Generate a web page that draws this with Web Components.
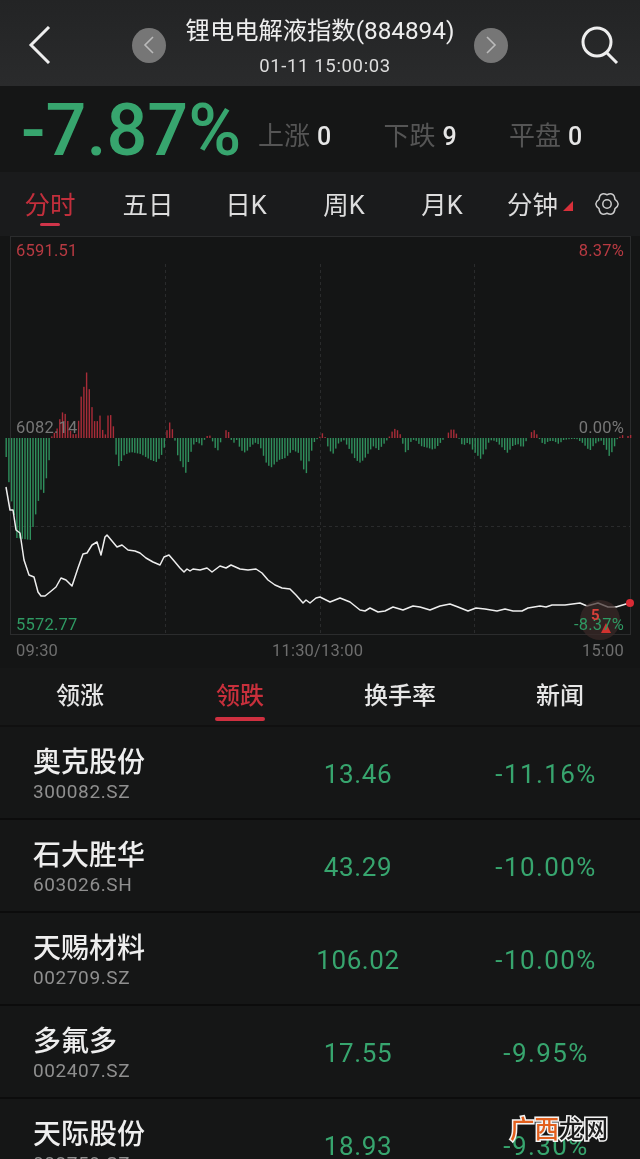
<!DOCTYPE html>
<html lang="zh">
<head>
<meta charset="utf-8">
<title>锂电电解液指数</title>
<style>
  html, body { margin: 0; height: 1159px; overflow: hidden; background: #151616; }
  body { position: relative; font-family: Roboto, "Noto Sans CJK SC", sans-serif; color: #e8e8e8; filter: blur(.35px); }
</style>
</head>
<body>
<index-header name="锂电电解液指数(884894)" time="01-11 15:00:03"></index-header>
<index-summary change="-7.87%" up="0" down="9" flat="0"></index-summary>
<period-tabs></period-tabs>
<minute-chart></minute-chart>
<rank-tabs></rank-tabs>
<stock-row name="奥克股份" code="300082.SZ" price="13.46" pct="-11.16%"></stock-row>
<stock-row name="石大胜华" code="603026.SH" price="43.29" pct="-10.00%"></stock-row>
<stock-row name="天赐材料" code="002709.SZ" price="106.02" pct="-10.00%"></stock-row>
<stock-row name="多氟多" code="002407.SZ" price="17.55" pct="-9.95%"></stock-row>
<stock-row name="天际股份" code="002759.SZ" price="18.93" pct="-9.30%"></stock-row>
<site-mark></site-mark>

<script>
// Top bar: back, prev/next, title, search
class IndexHeader extends HTMLElement {
  constructor() {
    super();
    this.attachShadow({ mode: 'open' });
    this.shadowRoot.innerHTML = `
    <style>
      :host { display: flex; align-items: center; height: 86px; box-sizing: border-box; background: linear-gradient(#232425, #2a2b2c); }
      .back { margin-left: 25px; width: 28px; height: 38px; margin-top: 4px; }
      .mid { flex: 1; display: flex; align-items: center; justify-content: center; margin-left: 78px; margin-right: 71px; gap: 18px; }
      .round { width: 34px; height: 35px; border-radius: 50%; background: #767676; display: flex; align-items: center; justify-content: center; margin-top: 4px; }
      .title { text-align: center; width: 272px; margin-top: 10px; }
      .name { font-size: 24.3px; line-height: 30px; color: #eee; white-space: nowrap; margin-top: -3px; }
      .time { font-size: 18.5px; line-height: 24px; color: #ddd; margin-top: 8px; padding-left: 10px; letter-spacing: .65px; }
      .search { width: 40px; height: 40px; margin-right: 20px; margin-top: 4px; }
    </style>
    <svg class="back" viewBox="0 0 28 38" fill="none" stroke="#eee" stroke-width="3"><path d="M24 1 L6 19 L24 37"/></svg>
    <div class="mid">
      <span class="round"><svg width="14" height="20" viewBox="0 0 14 20" fill="none" stroke="#bbb" stroke-width="1.6"><path d="M11 2 L3 10 L11 18"/></svg></span>
      <div class="title"><div class="name"></div><div class="time"></div></div>
      <span class="round"><svg width="14" height="20" viewBox="0 0 14 20" fill="none" stroke="#bbb" stroke-width="1.6"><path d="M3 2 L11 10 L3 18"/></svg></span>
    </div>
    <svg class="search" viewBox="0 0 40 40" fill="none" stroke="#eee" stroke-width="3"><circle cx="17" cy="17" r="14"/><path d="M27 28 L37 38"/></svg>`;
    this.shadowRoot.querySelector('.name').textContent = this.getAttribute('name');
    this.shadowRoot.querySelector('.time').textContent = this.getAttribute('time');
  }
}
customElements.define('index-header', IndexHeader);

// Big change figure and the up/down/flat counts
class IndexSummary extends HTMLElement {
  constructor() {
    super();
    this.attachShadow({ mode: 'open' });
    this.shadowRoot.innerHTML = `
    <style>
      :host { display: flex; align-items: center; height: 86px; background: #151616; padding-left: 21px; }
      .big { font-size: 72px; line-height: 86px; color: #37a56e; width: 237px; white-space: nowrap; font-weight: 500; padding-top: 3px; }
      .stat { width: 125.5px; font-size: 26px; color: #555; white-space: nowrap; padding-top: 8px; }
      .stat b { font-weight: 500; color: #e6e6e6; font-size: 25px; margin-left: 7px; }
    </style>
    <div class="big"></div>
    <div class="stat">上涨<b class="up"></b></div>
    <div class="stat">下跌<b class="down"></b></div>
    <div class="stat">平盘<b class="flat"></b></div>`;
    const r = this.shadowRoot;
    r.querySelector('.big').textContent = this.getAttribute('change');
    r.querySelector('.up').textContent = this.getAttribute('up');
    r.querySelector('.down').textContent = this.getAttribute('down');
    r.querySelector('.flat').textContent = this.getAttribute('flat');
  }
}
customElements.define('index-summary', IndexSummary);

// 分时 / 五日 / ... period switcher
class PeriodTabs extends HTMLElement {
  constructor() {
    super();
    this.attachShadow({ mode: 'open' });
    // six-lobed gear outline
    let gear = '';
    for (let i = 0; i < 6; i++) {
      const pt = (r, deg) => (13 + r * Math.cos(deg * Math.PI / 180)).toFixed(2) + ' ' + (13 + r * Math.sin(deg * Math.PI / 180)).toFixed(2);
      const a = i * 60;
      if (i === 0) gear += 'M' + pt(9.2, a - 30);
      gear += ' Q' + pt(14.4, a) + ' ' + pt(9.2, a + 30);
    }
    this.shadowRoot.innerHTML = `
    <style>
      :host { display: grid; grid-template-columns: repeat(6, 98px) 1fr; height: 64px; background: #1a1b1c; padding-left: 1px; font-size: 25.5px; color: #ddd; }
      span { position: relative; display: flex; align-items: center; justify-content: center; height: 64px; margin-top: -2px; white-space: nowrap; }
      .on { color: #c22f3c; }
      .on::after { content: ""; position: absolute; left: 39px; width: 20px; top: 53px; height: 3px; background: #d0354a; border-radius: 2px; }
      i { width: 0; height: 0; border-style: solid; border-width: 0 0 10px 10px; border-color: transparent transparent #d8303a transparent; margin: 8px 0 0 5px; }
      svg { align-self: center; margin: 0 0 0 5px; }
    </style>
    <span class="on">分时</span><span>五日</span><span>日K</span><span>周K</span><span>月K</span><span>分钟<i></i></span>
    <svg width="26" height="26" viewBox="0 0 26 26" fill="none" stroke="#ccc" stroke-width="1.5" stroke-linejoin="round">
      <path d="${gear} Z"/>
      <circle cx="13" cy="13" r="4.2"/>
    </svg>`;
  }
}
customElements.define('period-tabs', PeriodTabs);

// Intraday chart: volume-ish bars and the price line, drawn in page coordinates
const BAR_KEYS = [[5,-14],[7,-34],[10,-60],[13,-72],[16,-100],[30,-102],[33,-85],[36,-72],[40,-50],[42,-60],[45,-45],[49,-18],[50,0],
  [52,3],[56,8],[60,22],[63,28],[66,20],[69,12],[71,0],[73,5],[77,3],[79,36],[83,50],[86,66],[89,46],[92,26],[95,12],[99,24],[102,8],[105,3],[108,28],[112,18],[114,0],
  [116,-24],[119,-30],[122,-18],[130,-14],[140,-16],[150,-22],[156,-24],[163,-14],[165,0],[168,18],[172,8],[174,0],[176,-15],[185,-35],[190,-15],[194,-4],[198,-4],[200,-10],[203,-3],[205,0],[208,4],[211,0],[213,-8],[217,-13],[220,-4],[223,0],[225,8],[228,6],[230,0],[232,-6],[236,-2],[240,-12],[245,-15],[250,-8],[256,-4],[260,-10],[265,-24],[270,-30],[278,-22],[285,-20],[292,-12],[298,-15],[305,-38],[310,-16],[314,-3],[318,0],
  [322,5],[325,0],[328,-12],[333,-16],[337,-6],[343,-2],[348,-10],[355,-22],[360,-25],[366,-18],[372,-8],[378,-12],[384,-5],[388,0],[391,6],[395,10],[399,5],[401,0],[403,-10],[406,-17],[410,-4],[414,-1],[420,-8],[428,-10],[433,-12],[438,-7],[442,-2],[445,0],[448,6],[452,10],[456,4],[458,0],[462,-8],[468,-4],[472,-12],[480,-21],[485,-12],[489,-2],[495,-3],[500,-8],[507,-15],[512,-8],[517,-6],[522,-10],[526,-2],[529,0],[532,10],[536,4],[538,0],[543,-7],[548,-3],[553,-3],[558,-6],[563,-2],[570,-1],[576,-1],[582,-5],[589,-13],[594,-6],[600,-2],[605,-10],[609,-19],[614,-8],[617,0],[622,3],[624,0],[629,3]];
const LINE = [[6,487],[10,510],[13,510],[16,530],[20,533],[24,560],[29,575],[34,577],[38,592],[41,596],[45,596],[50,592],[56,587],[61,578],[66,580],[72,586],[78,568],[83,554],[87,553],[92,545],[97,542],[101,555],[105,537],[107,535],[112,541],[117,547],[122,545],[128,550],[135,551],[140,553],[146,558],[153,562],[160,565],[164,557],[169,555],[175,562],[180,568],[184,572],[187,569],[190,571],[193,569],[200,570],[207,568],[212,572],[220,566],[226,568],[231,565],[240,569],[248,570],[256,569],[262,573],[268,580],[275,585],[282,588],[290,589],[296,595],[303,603],[306,600],[310,603],[316,598],[320,597],[330,602],[340,598],[350,602],[360,610],[365,611],[370,608],[378,612],[385,611],[393,607],[403,610],[413,606],[420,607],[430,610],[440,606],[450,604],[458,607],[468,611],[476,608],[485,609],[497,611],[505,609],[513,611],[522,611],[528,608],[540,606],[546,607],[552,605],[558,605],[565,605],[580,603],[587,606],[598,603],[608,607],[616,607],[626,604],[630,604]];

class MinuteChart extends HTMLElement {
  constructor() {
    super();
    this.attachShadow({ mode: 'open' });
    let bars = '';
    for (let x = 5.5, k = 0; x < 630; x += 2.68) {
      while (k < BAR_KEYS.length - 2 && BAR_KEYS[k + 1][0] < x) k++;
      const [x0, h0] = BAR_KEYS[k], [x1, h1] = BAR_KEYS[k + 1];
      const h = h0 + (h1 - h0) * Math.min(1, Math.max(0, (x - x0) / (x1 - x0)));
      if (Math.abs(h) < 0.8) continue;
      bars += h > 0
        ? `<rect x="${x.toFixed(1)}" y="${(438 - h).toFixed(1)}" width="1.4" height="${h.toFixed(1)}" fill="#a82c38"/>`
        : `<rect x="${x.toFixed(1)}" y="438" width="1.4" height="${(-h).toFixed(1)}" fill="#2f8f5c"/>`;
    }
    this.shadowRoot.innerHTML = `
    <style>
      :host { display: block; position: relative; height: 432px; background: #141515; }
      svg { position: absolute; left: 0; top: -236px; }
      .l { position: absolute; font-size: 16.5px; line-height: 20px; letter-spacing: .2px; white-space: nowrap; }
      .red { color: #b83a42; } .gray { color: #777; } .green { color: #2f9a63; }
      .left { left: 16px; } .right { right: 16px; }
      .axis { color: #6e6e6e; top: 405px; }
    </style>
    <svg width="640" height="670" viewBox="0 0 640 670">
      <rect x="10.5" y="236.5" width="620" height="398" fill="none" stroke="#2b2c2d"/>
      <g stroke="#2a2b2c" stroke-dasharray="3 3" fill="none">
        <path d="M165.5 264V634M320.5 264V634M474.5 264V634M11 526.5H630"/>
      </g>
      ${bars}
      <polyline points="${LINE.map(p => p.join(',')).join(' ')}" fill="none" stroke="#eee" stroke-width="1.5" stroke-linejoin="round"/>
      <circle cx="600" cy="620" r="20" fill="#3a2a28" opacity=".7"/>
      <path d="M606 623 L611 633 H601 Z" fill="#d0322f"/>
      <circle cx="630" cy="603" r="4" fill="#d92b35"/>
    </svg>
    <span class="l red left" style="top:5px">6591.51</span>
    <span class="l red right" style="top:5px">8.37%</span>
    <span class="l gray left" style="top:182px">6082.14</span>
    <span class="l gray right" style="top:182px">0.00%</span>
    <span class="l green left" style="top:379px">5572.77</span>
    <span class="l green right" style="top:379px">-8.37%</span>
    <span class="l" style="top:369px;left:591px;color:#d8403a;font-size:15px;font-weight:700">5</span>
    <span class="l axis left">09:30</span>
    <span class="l axis" style="left:272px">11:30/13:00</span>
    <span class="l axis right">15:00</span>`;
  }
}
customElements.define('minute-chart', MinuteChart);

// 领涨 / 领跌 / 换手率 / 新闻
class RankTabs extends HTMLElement {
  constructor() {
    super();
    this.attachShadow({ mode: 'open' });
    this.shadowRoot.innerHTML = `
    <style>
      :host { display: grid; grid-template-columns: repeat(4, 160px); height: 59px; background: #161717; font-size: 24px; font-weight: 500; color: #e6e6e6; box-shadow: inset 0 -2px 0 #101010; }
      span { position: relative; display: flex; justify-content: center; line-height: 56px; }
      .on { color: #c8303c; }
      .on::after { content: ""; position: absolute; left: 55px; width: 50px; top: 49px; height: 4px; background: #cf3040; border-radius: 2px; }
    </style>
    <span>领涨</span><span class="on">领跌</span><span>换手率</span><span>新闻</span>`;
  }
}
customElements.define('rank-tabs', RankTabs);

// One stock in the ranking list
class StockRow extends HTMLElement {
  constructor() {
    super();
    this.attachShadow({ mode: 'open' });
    this.shadowRoot.innerHTML = `
    <style>
      :host { display: grid; grid-template-columns: 250px 150px 1fr; align-items: center; height: 93px; box-sizing: border-box; padding: 4px 0 0 33px; background: #151616; border-bottom: 2px solid #0c0c0c; }
      .name { font-size: 28px; line-height: 36px; font-weight: 500; color: #eee; }
      .code { font-size: 19px; line-height: 24px; color: #8f8f8f; letter-spacing: .6px; margin-top: -1px; }
      .price, .pct { font-size: 26px; color: #37a56e; text-align: center; letter-spacing: .6px; margin-top: -2px; }
      .pct { letter-spacing: 1.4px; padding-left: 19px; }
    </style>
    <div><div class="name"></div><div class="code"></div></div>
    <div class="price"></div><div class="pct"></div>`;
    for (const k of ['name', 'code', 'price', 'pct'])
      this.shadowRoot.querySelector('.' + k).textContent = this.getAttribute(k);
  }
}
customElements.define('stock-row', StockRow);

// Site watermark stamped over the bottom corner
class SiteMark extends HTMLElement {
  constructor() {
    super();
    this.attachShadow({ mode: 'open' });
    this.shadowRoot.innerHTML = `
    <style>
      :host { position: absolute; left: 510px; top: 1112px; font-size: 24.5px; line-height: 36px; font-weight: 500; white-space: nowrap; -webkit-text-stroke: 3px #f4f4f4; paint-order: stroke fill; }
      .a { color: #e2601e; }
      .b { color: #1c1c1c; }
    </style>
    <span class="a">广西</span><span class="b">龙网</span>`;
  }
}
customElements.define('site-mark', SiteMark);
</script>
</body>
</html>
